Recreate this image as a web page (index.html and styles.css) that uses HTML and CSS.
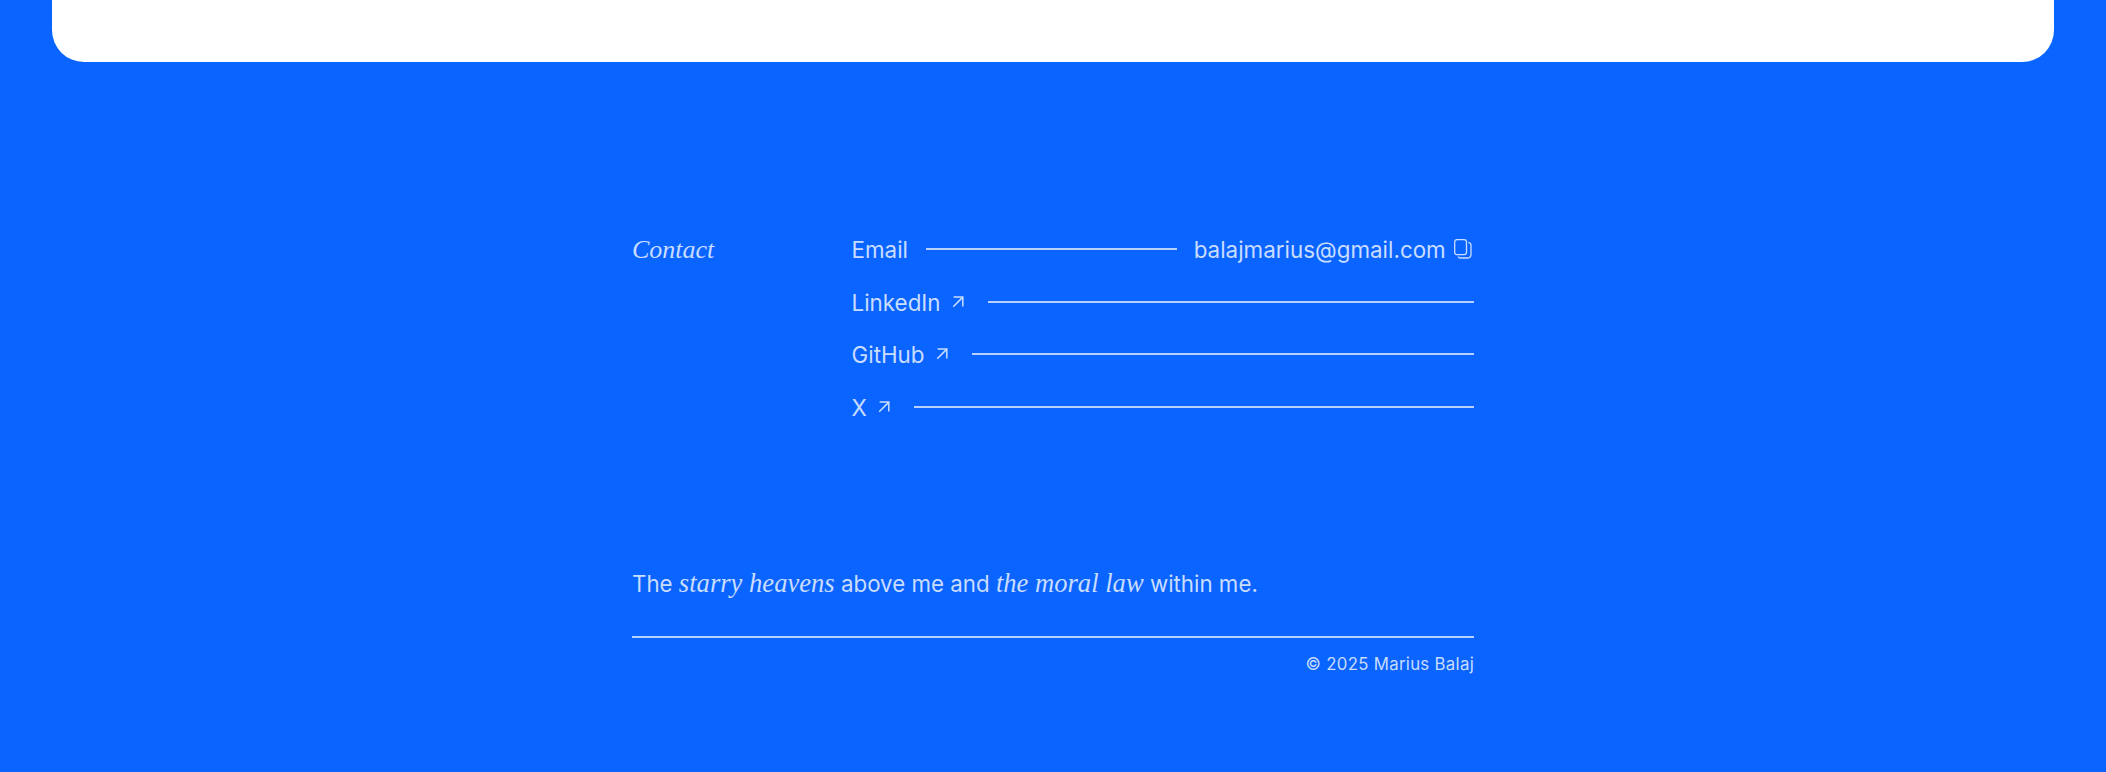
FILE: index.html
```html
<!DOCTYPE html>
<html lang="en">
<head>
<meta charset="utf-8">
<title>Marius Balaj</title>
<link rel="stylesheet" href="styles.css">
</head>
<body>
<div class="card"></div>
<footer class="footer">
  <section class="contact">
    <h2 class="contact-title">Contact</h2>
    <ul class="links">
      <li class="row">
        <span>Email</span><span class="rule"></span><span>balajmarius@gmail.com</span>
        <svg class="copy" viewBox="0 0 18 20" fill="none" stroke="currentColor" stroke-width="1.3"><rect x="0.7" y="0.7" width="11.8" height="15" rx="2.4"/><path d="M14.4 3.4c1.6.3 2.6 1.3 2.6 3v8.8c0 2.3-1.4 3.8-3.7 3.8H6.6c-1.2 0-2-.5-2.5-1.4"/></svg>
      </li>
      <li class="row">
        <a href="#">LinkedIn</a>
        <svg class="arrow" viewBox="0 0 12 12" fill="none" stroke="currentColor" stroke-width="1.5"><path d="M1.2 10.8 10.6 1.4M1.6 1h9.2v9.4"/></svg>
        <span class="rule"></span>
      </li>
      <li class="row">
        <a href="#">GitHub</a>
        <svg class="arrow" viewBox="0 0 12 12" fill="none" stroke="currentColor" stroke-width="1.5"><path d="M1.2 10.8 10.6 1.4M1.6 1h9.2v9.4"/></svg>
        <span class="rule"></span>
      </li>
      <li class="row">
        <a href="#">X</a>
        <svg class="arrow" viewBox="0 0 12 12" fill="none" stroke="currentColor" stroke-width="1.5"><path d="M1.2 10.8 10.6 1.4M1.6 1h9.2v9.4"/></svg>
        <span class="rule"></span>
      </li>
    </ul>
  </section>
  <p class="quote">The <em>starry heavens</em> above me and <em>the moral law</em> within me.</p>
  <p class="copyright">© 2025 Marius Balaj</p>
</footer>
</body>
</html>
```
FILE: styles.css
```css
* { box-sizing: border-box; }
html, body { margin: 0; height: 100%; }
body {
  background: #0a64ff;
  color: rgba(255, 255, 255, 0.78);
  font-family: Inter, "Liberation Sans", sans-serif;
  font-size: 22.4px;
  overflow: hidden;
}
.card {
  height: 62px;
  margin: 0 52px;
  background: #fff;
  border-radius: 0 0 32px 32px;
}
.footer {
  width: 842px;
  margin: 0 auto;
  padding-top: 167.6px;
}
.contact {
  display: grid;
  grid-template-columns: 219.5px 1fr;
}
.contact-title {
  margin: 0;
  font-family: "Liberation Serif", serif;
  font-style: italic;
  font-weight: 400;
  font-size: 26px;
  line-height: 40px;
}
.links { list-style: none; margin: 0; padding: 0; }
.row {
  display: flex;
  align-items: center;
  height: 40px;
  margin-bottom: 12.5px;
}
.row a { color: inherit; text-decoration: none; }
.rule {
  flex: 1;
  height: 2px;
  margin: 0 17px 0 17.5px;
  background: rgba(255, 255, 255, 0.7);
  position: relative;
  top: -0.5px;
}
.row .arrow + .rule { margin-right: 0; margin-left: 23.5px; }
.arrow { width: 12px; height: 12px; margin-left: 11.5px; position: relative; top: -0.5px; }
.copy { width: 18px; height: 20px; margin-left: 8.6px; margin-right: 1.7px; position: relative; top: -1px; }
.quote { margin: 123.4px 0 0; font-size: 22.3px; line-height: 40px; padding-bottom: 32px; border-bottom: 2px solid rgba(255, 255, 255, 0.7); }
.quote em { font-family: "Liberation Serif", serif; font-size: 26.6px; }
.copyright { margin: 13px 0 0; text-align: right; font-size: 16.8px; line-height: 26px; letter-spacing: .3px; }
```
